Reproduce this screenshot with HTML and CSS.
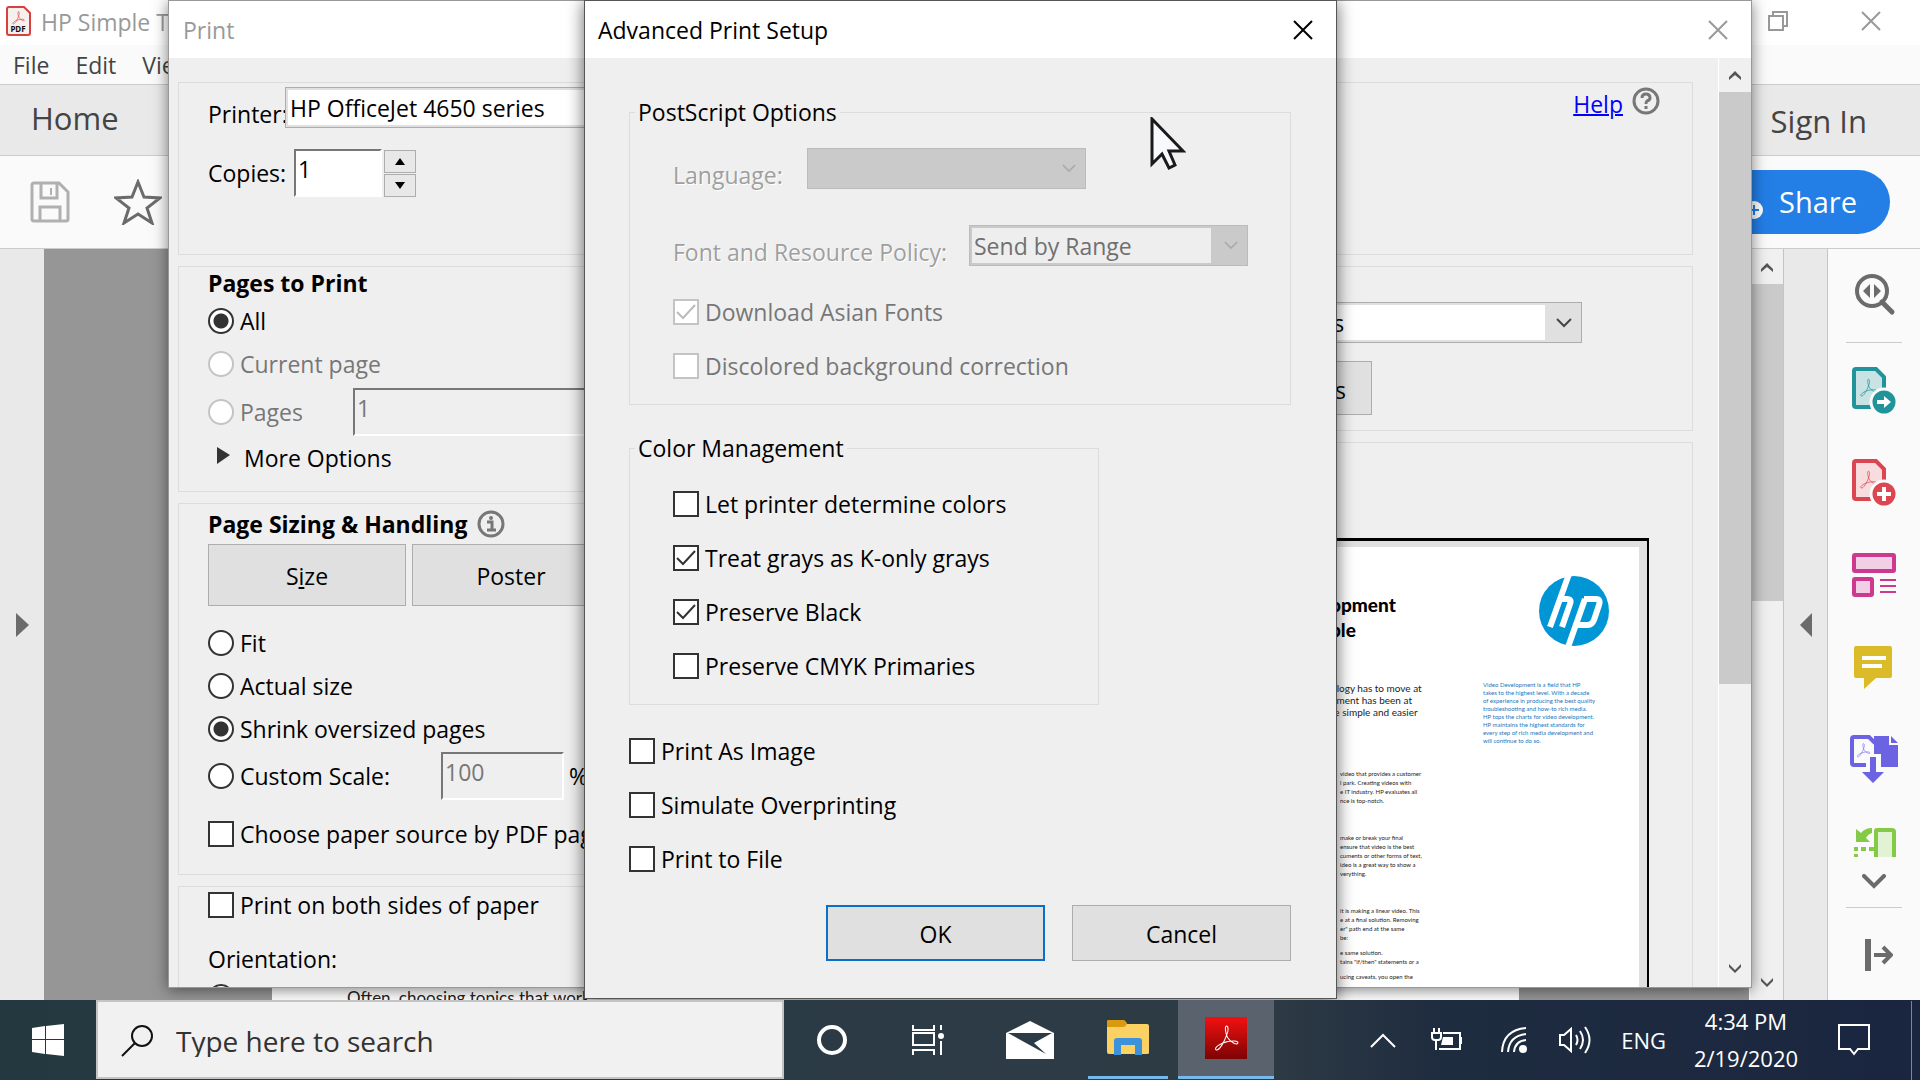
FILE: index.html
```
<!DOCTYPE html>
<html lang="en">
<head>
<meta charset="utf-8">
<title>Advanced Print Setup</title>
<link rel="stylesheet" href="styles.css">
</head>
<body>
<svg class="defs" aria-hidden="true">
  <symbol id="chev" viewBox="0 0 16 10"><path d="M1 1l7 7 7-7" fill="none" stroke="currentColor" stroke-width="2"/></symbol>
  <symbol id="up" viewBox="0 0 14 12"><path d="M1 10V7l6-6 6 6v3L7 5z" fill="currentColor"/></symbol>
  <symbol id="down" viewBox="0 0 14 12"><path d="M1 1v3l6 6 6-6V1L7 7z" fill="currentColor"/></symbol>
  <symbol id="close" viewBox="0 0 20 20"><path d="M1 1l18 18M19 1L1 19" fill="none" stroke="currentColor" stroke-width="2"/></symbol>
  <symbol id="acro" viewBox="0 0 26 26"><path d="M13 1c2 0 2 5 0 9-2 6-7 15-10 14-3-2 5-7 11-8 5-1 10-1 10 1 0 3-7 0-10-5-2-4-3-11-1-11z" fill="none" stroke="currentColor"/></symbol>
</svg>

<main class="desktop">
  <section class="app" aria-label="Document window">
    <header class="app-title">
      <svg width="25" height="30" viewBox="0 0 25 30"><path d="M3 1h15l6 6v20q0 2-2 2H3q-2 0-2-2V3q0-2 2-2z" fill="#f6f0ef" stroke="#d9403b" stroke-width="2"/><use href="#acro" x="5" y="5" width="15" height="14" color="#e02b27"/><text x="12" y="26" text-anchor="middle" class="pdf-tag">PDF</text></svg>
      <span class="app-name">HP Simple T</span>
      <button class="bare" aria-label="Restore"><svg width="20" height="20" viewBox="0 0 20 20" fill="none" stroke="#999" stroke-width="2"><path d="M1 5h14v14H1zM5 5V1h14v14h-4"/></svg></button>
      <button class="bare" aria-label="Close"><svg width="20" height="20"><use href="#close"/></svg></button>
    </header>
    <nav class="menu"><button class="bare">File</button><button class="bare">Edit</button><button class="bare">View</button></nav>
    <div class="tabs"><button class="bare">Home</button><button class="bare sign">Sign In</button></div>
    <div class="tools">
      <button class="bare" aria-label="Save"><svg width="40" height="42" viewBox="0 0 40 42" fill="none" stroke="#b0b0b0" stroke-width="3"><path d="M4 2h25l9 9v27q0 2-2 2H4q-2 0-2-2V4q0-2 2-2zM11 2v15h16V2M10 40V26h20v14"/><path d="M21 7v7" stroke-width="2"/></svg></button>
      <button class="bare" aria-label="Favorite"><svg width="48" height="46" viewBox="0 0 48 46"><path d="M24 3l6 15 16 1-13 10 5 15-14-9-14 9 5-15L2 19l16-1z" fill="none" stroke="#6b6b6b" stroke-width="3"/></svg></button>
      <button class="share"><svg width="24" height="18" viewBox="0 0 24 18"><circle cx="15" cy="9" r="9" fill="#fff"/><path d="M15 4v10M10 9h10" stroke="#237ee6" stroke-width="2"/></svg>Share</button>
    </div>
    <div class="work">
      <div class="rail"><svg width="13" height="24" viewBox="0 0 13 24"><path d="M0 0l13 12L0 24z" fill="#6b6b6b"/></svg></div>
      <div class="canvas"><article class="sheet"><p>Often, choosing topics that work</p></article></div>
      <div class="bar wide"><svg width="14" height="12"><use href="#up"/></svg><i class="thumb short"></i><svg width="14" height="12"><use href="#down"/></svg></div>
      <div class="rail right"><svg width="12" height="24" viewBox="0 0 12 24"><path d="M12 0L0 12l12 12z" fill="#6b6b6b"/></svg></div>
      <aside class="side">
        <svg class="find" width="48" height="44" viewBox="0 0 48 44"><circle cx="21" cy="19" r="15" fill="none" stroke="#6b6b6b" stroke-width="4"/><path d="M31 30l10 10" stroke="#6b6b6b" stroke-width="5" stroke-linecap="round"/><path d="M19 12v14l-7-7zM23 12v14l7-7z" fill="#6b6b6b"/></svg>
        <hr>
        <svg width="48" height="48" viewBox="0 0 48 48"><path d="M6 2h20l8 8v30H6q-2 0-2-2V4q0-2 2-2z" fill="#c9e3e4" stroke="#20949a" stroke-width="4"/><use href="#acro" x="9" y="10" width="19" height="22" color="#20949a"/><circle cx="34" cy="35" r="13" fill="#20949a" stroke="#fafafa" stroke-width="3"/><path d="M27 33h7v-4l7 6-7 6v-4h-7z" fill="#fff"/></svg>
        <svg width="48" height="48" viewBox="0 0 48 48"><path d="M6 2h20l8 8v30H6q-2 0-2-2V4q0-2 2-2z" fill="#f8dcde" stroke="#db4650" stroke-width="4"/><use href="#acro" x="9" y="10" width="19" height="22" color="#db4650"/><circle cx="34" cy="35" r="13" fill="#db4650" stroke="#fafafa" stroke-width="3"/><path d="M34 28v14M27 35h14" stroke="#fff" stroke-width="4"/></svg>
        <svg width="48" height="48" viewBox="0 0 48 48" fill="#f3cfe6" stroke="#cb3a8f" stroke-width="4"><rect x="4" y="4" width="40" height="16" rx="1"/><rect x="4" y="28" width="18" height="16" rx="1"/><path d="M30 29h16M30 35h16M30 41h16" stroke-width="2"/></svg>
        <svg width="48" height="48" viewBox="0 0 48 48"><path d="M6 3h34q2 0 2 2v28q0 2-2 2H26L14 46V35H6q-2 0-2-2V5q0-2 2-2z" fill="#dcbb29"/><path d="M12 15h24M12 23h20" stroke="#fff" stroke-width="4"/></svg>
        <svg width="48" height="48" viewBox="0 0 48 48"><path d="M16 30H4q-2 0-2-2V4q0-2 2-2h15l6 6" fill="none" stroke="#6c63e3" stroke-width="4"/><use href="#acro" x="6" y="7" width="15" height="17" color="#6c63e3"/><path d="M24 1h15v9h9v22H31V19h-7z" fill="#6c63e3"/><path d="M41 1l7 7h-7zM20 22h6v15h8L23 48 12 37h8z" fill="#6c63e3"/></svg>
        <svg class="cut" width="48" height="30" viewBox="0 0 48 30"><path d="M26 30V4q0-1 1-1h15q2 0 2 2v25" fill="#e2f2d4" stroke="#85ca46" stroke-width="4"/><path d="M6 2v13h14l-4-4q2-4 6-5V1q-7 0-11 5z" fill="#85ca46"/><path d="M4 22h4m3 0h5m3 0h5M6 20v4m0 3v3" stroke="#85ca46" stroke-width="4"/></svg>
        <svg width="24" height="15" viewBox="0 0 24 15"><path d="M2 2l10 10L22 2" fill="none" stroke="#6b6b6b" stroke-width="4" stroke-linecap="round"/></svg>
        <hr>
        <svg class="expand" width="28" height="34" viewBox="0 0 28 34" stroke="#6b6b6b" fill="none"><path d="M3 1v32" stroke-width="6"/><path d="M9 17h15M18 9l8 8-8 8" stroke-width="4"/></svg>
      </aside>
    </div>
  </section>

  <section class="window print" aria-label="Print">
    <header class="caption"><span>Print</span><button class="bare" aria-label="Close"><svg width="20" height="20"><use href="#close"/></svg></button></header>
    <div class="scroll">
      <form class="form">
        <div class="group top">
          <div class="line spread">
            <div class="line end"><label for="printer">Printer:</label><span class="combo printer"><select id="printer"><option>HP OfficeJet 4650 series</option></select></span></div>
            <div class="help"><a href="#help">Help</a><svg width="28" height="28" viewBox="0 0 28 28"><circle cx="14" cy="14" r="12" fill="none" stroke="#777" stroke-width="3"/><path d="M10 11q0-4 4-4t4 4q0 2-3 3-1 1-1 3M14 19v3" fill="none" stroke="#777" stroke-width="3"/></svg></div>
          </div>
          <div class="line copies"><label for="copies">Copies:</label><input id="copies" class="box" value="1"><span class="spin"><button type="button" aria-label="More copies"><svg width="10" height="7"><path d="M0 7l5-7 5 7z"/></svg></button><button type="button" aria-label="Fewer copies"><svg width="10" height="7"><path d="M0 0l5 7 5-7z"/></svg></button></span></div>
        </div>
        <div class="columns">
          <div class="left">
            <div class="group pages">
              <h2>Pages to Print</h2>
              <label class="opt"><input type="radio" name="range" checked>All</label>
              <label class="opt off"><input type="radio" name="range" disabled>Current page</label>
              <div class="line tall"><label class="opt off"><input type="radio" name="range" disabled>Pages</label><input class="box range" aria-label="Page range" value="1" disabled></div>
              <button type="button" class="bare more"><svg width="13" height="17"><path d="M0 0l13 8L0 17z" fill="#333"/></svg>More Options</button>
            </div>
            <div class="group sizing">
              <h2 class="with-icon">Page Sizing &amp; Handling <svg width="28" height="28" viewBox="0 0 28 28"><circle cx="14" cy="14" r="12" fill="none" stroke="#777" stroke-width="3"/><path d="M10 12h5v8M10 20h9" fill="none" stroke="#777" stroke-width="3"/><circle cx="14" cy="8" r="2" fill="#777"/></svg></h2>
              <div class="line modes"><button type="button" class="push">S<u>i</u>ze</button><button type="button" class="push">Poster</button></div>
              <label class="opt"><input type="radio" name="scale">Fit</label>
              <label class="opt"><input type="radio" name="scale">Actual size</label>
              <label class="opt"><input type="radio" name="scale" checked>Shrink oversized pages</label>
              <div class="line custom"><label class="opt"><input type="radio" name="scale">Custom Scale:</label><input class="box percent" aria-label="Custom scale" value="100" disabled>%</div>
              <label class="opt paper"><input type="checkbox">Choose paper source by PDF page size</label>
            </div>
            <div class="group duplex">
              <label class="opt"><input type="checkbox">Print on both sides of paper</label>
              <div class="orient">Orientation:</div>
              <label class="opt"><input type="radio" name="orient" aria-label="Portrait"></label>
            </div>
          </div>
          <div class="rightcol">
            <div class="group comments">
              <div class="stack">
                <span class="combo docs"><select aria-label="Comments and forms"><option>Document and Markups</option></select><svg width="16" height="10"><use href="#chev"/></svg></span>
                <button type="button" class="push">Summarize Comments</button>
              </div>
            </div>
            <div class="group look">
              <div class="preview"><div class="paperview">
                <div class="copy">
                  <h3>opment<br>ble</h3>
                  <p class="lead">ology has to move at<br>pment has been at<br>fe simple and easier</p>
                  <p>video that provides a customer<br>l park. Creating videos with<br>e IT industry. HP evaluates all<br>nce is top-notch.</p>
                  <p>make or break your final<br>ensure that video is the best<br>cuments or other forms of text,<br>ideo is a great way to show a<br>verything.</p>
                  <p>it is making a linear video. This<br>e at a final solution. Removing<br>er" path end at the same<br>be:</p>
                  <p class="near">e same solution.<br>tains "if/then" statements or a</p>
                  <p class="near">ucing caveats, you open the</p>
                </div>
                <div class="aside">
                  <svg width="71" height="72" viewBox="0 0 71 72"><circle cx="35" cy="36" r="35" fill="#0096d6"/><g fill="none" stroke="#fff" stroke-width="6"><path d="M30 -1L11 52M22 24h6q5 0 3 5l-8 23"/><path d="M46 24L28 75M45 24h12q5 0 3 6l-5 15q-2 5-6 5H38"/></g></svg>
                  <p>Video Development is a field that HP<br>takes to the highest level. With a decade<br>of experience in producing the best quality<br>troubleshooting and how-to rich media.<br>HP tops the charts for video development.<br>HP maintains the highest standards for<br>every step of rich media development and<br>will continue to do so.</p>
                </div>
              </div></div>
            </div>
          </div>
        </div>
      </form>
      <div class="bar"><svg width="14" height="12"><use href="#up"/></svg><i class="thumb"></i><svg width="14" height="12"><use href="#down"/></svg></div>
    </div>
  </section>

  <section class="window advanced" role="dialog" aria-label="Advanced Print Setup">
    <header class="caption"><span>Advanced Print Setup</span><button class="bare" aria-label="Close dialog"><svg width="20" height="20"><use href="#close"/></svg></button></header>
    <form class="setup">
      <fieldset>
        <legend>PostScript Options</legend>
        <div class="line end ps"><label class="etched lang" for="lang">Language:</label><span class="combo dim blank"><select id="lang" disabled><option></option></select><svg width="14" height="9"><use href="#chev"/></svg></span></div>
        <div class="line end ps"><label class="etched policy" for="policy">Font and Resource Policy:</label><span class="combo dim"><select id="policy" disabled><option>Send by Range</option></select><svg width="14" height="9"><use href="#chev"/></svg></span></div>
        <label class="opt off"><input type="checkbox" checked disabled>Download Asian Fonts</label>
        <label class="opt off"><input type="checkbox" disabled>Discolored background correction</label>
      </fieldset>
      <fieldset class="color">
        <legend>Color Management</legend>
        <label class="opt"><input type="checkbox">Let printer determine colors</label>
        <label class="opt"><input type="checkbox" checked>Treat grays as K-only grays</label>
        <label class="opt"><input type="checkbox" checked>Preserve Black</label>
        <label class="opt"><input type="checkbox">Preserve CMYK Primaries</label>
      </fieldset>
      <div class="extras">
        <label class="opt"><input type="checkbox">Print As Image</label>
        <label class="opt"><input type="checkbox">Simulate Overprinting</label>
        <label class="opt"><input type="checkbox">Print to File</label>
      </div>
      <div class="actions"><button type="button" class="push default">OK</button><button type="button" class="push">Cancel</button></div>
    </form>
  </section>
  <svg class="pointer" width="36" height="54" viewBox="0 0 36 54"><path d="M2 2v45l10-10 7 14 6-3-6-14h14z" fill="#f8f9fc" stroke="#1a1a1a" stroke-width="3"/></svg>
</main>

<footer class="taskbar">
  <button class="start" aria-label="Start"><svg width="32" height="32" viewBox="0 0 32 32" fill="#fff"><path d="M0 4l13-2v13H0zM14 2l18-2v15H14zM0 16h13v14L0 28zM14 16h18v16l-18-2z"/></svg></button>
  <label class="search"><svg width="34" height="34" viewBox="0 0 34 34" fill="none" stroke="#111" stroke-width="2"><circle cx="22" cy="12" r="10"/><path d="M15 19L2 32"/></svg><input placeholder="Type here to search" aria-label="Search"></label>
  <div class="pins">
    <button aria-label="Cortana"><svg width="32" height="32"><circle cx="16" cy="16" r="13" fill="none" stroke="#fff" stroke-width="4"/></svg></button>
    <button aria-label="Task view"><svg width="32" height="32" viewBox="0 0 32 32" fill="none" stroke="#fff" stroke-width="2"><path d="M1 1v5h21V1M1 9h21v12H1zM1 31v-5h21v5M29 1v5M29 17v14"/><circle cx="29" cy="12" r="3" fill="#fff" stroke="none"/></svg></button>
    <button aria-label="Mail"><svg width="48" height="38" viewBox="0 0 48 38"><path d="M0 12L24 0l24 12v26H0z" fill="#fff"/><path d="M2 12h44L28 22l12 11z" fill="#2b3c47"/></svg></button>
    <button class="open" aria-label="File Explorer"><svg width="42" height="36" viewBox="0 0 42 36"><path d="M0 2q0-2 2-2h15l3 4h20q2 0 2 2v27q0 1-2 1H2q-2 0-2-2z" fill="#fcd164"/><path d="M0 2q0-2 2-2h15l3 3q-1 4-4 4H0z" fill="#d99a10"/><path d="M7 35V21q0-3 3-3h22q3 0 3 3v14h-7V25H14v10z" fill="#3c93d9"/></svg></button>
    <button class="open active" aria-label="Acrobat"><svg width="42" height="42" viewBox="0 0 42 42"><defs><linearGradient id="red" x2="0" y2="1"><stop stop-color="#f41010"/><stop offset="1" stop-color="#7d0303"/></linearGradient></defs><path d="M0 0h42v42H0z" fill="url(#red)"/><use href="#acro" x="8" y="8" width="27" height="27" color="#fff"/></svg></button>
  </div>
  <div class="tray">
    <svg width="26" height="15" viewBox="0 0 26 15" class="t1"><path d="M1 14L13 2l12 12"/></svg>
    <svg width="32" height="24" viewBox="0 0 32 24" class="t2"><path d="M12 5h17v16H8M30 9v7M3 0v5M8 0v5M1 5h9v4q0 3-3 3H4q-3 0-3-3zM5 12v10"/><path d="M12 9h10v8H10z" fill="#fff" stroke="none"/></svg>
    <svg width="26" height="26" viewBox="0 0 26 26" class="t3"><path d="M1 25Q2 3 25 1M7 25Q8 9 25 7M13 25q1-11 12-12"/><circle cx="22" cy="22" r="3" fill="#fff"/></svg>
    <svg width="34" height="28" viewBox="0 0 34 28" class="t4"><path d="M1 9h4l7-6v22l-7-6H1zM17 9q3 5 0 10M21 5q6 9 0 18M26 1q9 13 0 26"/></svg>
    <span class="lang-id">ENG</span>
    <time>4:34 PM<br>2/19/2020</time>
    <svg width="32" height="32" viewBox="0 0 32 32" class="t5"><path d="M1 1h30v24H20l-4 5-4-5H1z"/></svg>
  </div>
</footer>
</body>
</html>
```
FILE: styles.css
```
* { box-sizing: border-box; }
body { margin: 0; height: 100vh; display: flex; flex-direction: column; overflow: hidden; font: 23px/32px "Open Sans", "Noto Sans", sans-serif; color: #000; background: #2b3a45; }
button, input, select { font: inherit; color: inherit; margin: 0; }
button { padding: 0; }
h2, h3, p { margin: 0; }
svg { display: block; flex: none; }
.defs { position: absolute; width: 0; height: 0; }
.bare { border: 0; background: none; }
.desktop { position: relative; flex: 1; min-height: 0; overflow: hidden; }
.line { display: flex; align-items: center; }
.end { align-items: flex-end; }
.end > label { line-height: 28px; }
.spread { justify-content: space-between; align-items: flex-start; }

/* document window */
.app { height: 100%; display: flex; flex-direction: column; background: #fafafa; color: #444; }
.app-title { height: 45px; padding: 0 39px 3px 6px; display: flex; align-items: center; background: #fff; color: #999; }
.app-name { margin-left: 10px; padding-top: 2px; flex: 1; }
.app-title .bare + .bare { margin-left: 73px; }
.pdf-tag { font: bold 8px "Noto Sans", sans-serif; fill: #111; }
.menu { height: 39px; padding-left: 13px; display: flex; align-items: center; gap: 26px; }
.tabs { height: 72px; padding: 0 53px 4px 31px; display: flex; justify-content: space-between; align-items: center; background: #e9e9e9; border: 1px solid #ccc; border-width: 1px 0; font-size: 31px; }
.tabs .sign { padding-top: 6px; }
.tools { height: 93px; padding: 0 30px; display: flex; align-items: center; gap: 44px; border-bottom: 1px solid #ccc; }
.share { margin-left: auto; height: 64px; width: 172px; padding-right: 33px; display: flex; align-items: center; justify-content: flex-end; gap: 16px; border: 0; border-radius: 0 32px 32px 0; background: #237ee6; color: #fff; font-size: 29px; }
.share svg { margin-top: 16px; }
.work { flex: 1; min-height: 0; display: flex; }
.rail { width: 44px; display: flex; align-items: center; justify-content: center; background: #e9e9e9; }
.rail.right { border: 1px solid #c4c4c4; border-width: 0 1px; width: 45px; }
.canvas { flex: 1; padding: 0 230px 0 228px; background: #969696; }
.sheet { height: 100%; padding-left: 75px; display: flex; align-items: flex-end; overflow: hidden; background: #fff; }
.sheet p { margin-bottom: -8px; font: 17px/20px Lato, sans-serif; color: #222; }
.bar { width: 33px; padding: 12px 0; display: flex; flex-direction: column; align-items: center; background: #f0f0f0; color: #555; border-left: 1px solid #fff; }
.bar .thumb { width: 32px; height: 592px; margin: 10px 0 auto; background: #cacaca; }
.bar.wide { width: 34px; padding: 13px 0 11px; }
.bar .thumb.short { height: 317px; }
.side { width: 92px; padding: 23px 0 29px; display: flex; flex-direction: column; align-items: center; background: #fafafa; }
.side > svg { margin-bottom: 44px; }
.side hr { width: 56px; margin: 0 0 24px; border: 0; border-top: 1px solid #ccc; }
.side .find { margin-bottom: 26px; margin-left: 2px; }
.side .cut { margin-bottom: 17px; }
.side .cut + svg { margin-bottom: 18px; }
.side hr ~ hr { margin-bottom: 30px; }
.side .expand { margin: 0 0 0 10px; }

/* shared dialog parts */
.window { position: absolute; top: 0; display: flex; flex-direction: column; background: #efefef; }
.caption { height: 58px; padding: 0 23px 0 13px; display: flex; align-items: center; justify-content: space-between; background: #fff; flex: none; }
.group { border: 1px solid #dcdcdc; padding-left: 29px; }
.opt { display: flex; align-items: center; gap: 6px; height: 43px; white-space: nowrap; }
.opt input { appearance: none; flex: none; width: 26px; height: 26px; border: 2px solid #333; background: #fff center / 20px no-repeat; }
.opt input[type=radio] { border-radius: 50%; }
.opt input[type=radio]:checked { background: radial-gradient(circle, #333 7px, #fff 8px); }
.opt input[type=checkbox]:checked { background-image: url("data:image/svg+xml,%3Csvg xmlns='http://www.w3.org/2000/svg' viewBox='0 0 20 20'%3E%3Cpath d='M1 10l6 6L19 3' fill='none' stroke='%23333' stroke-width='2'/%3E%3C/svg%3E"); }
.off { color: #777; }
.off input { border-color: #c4c4c4; }
.opt.off input[type=checkbox]:checked { background-image: url("data:image/svg+xml,%3Csvg xmlns='http://www.w3.org/2000/svg' viewBox='0 0 20 20'%3E%3Cpath d='M1 10l6 6L19 3' fill='none' stroke='%23bbb' stroke-width='2'/%3E%3C/svg%3E"); }
.box { height: 48px; padding: 0 2px 8px; border: 2px solid; border-color: #777 #fff #fff #777; border-radius: 0; background: #fff; }
.box:disabled { background: #efefef; color: #777; }
.push { border: 1px solid #adadad; background: #e0e0e0; padding-top: 2px; }
.combo { position: relative; display: block; height: 41px; background: #e0e0e0; border: 1px solid #adadad; padding: 2px 36px 2px 2px; }
.combo select { appearance: none; display: block; width: 100%; height: 35px; padding: 0 2px; border: 0; border-radius: 0; background: #fff; opacity: 1; }
.combo svg { position: absolute; right: 9px; top: 15px; color: #444; }
.combo.dim { width: 279px; background: #cacaca; border-color: #bbb; }
.combo.dim select { background: #eee; color: #707070; }
.combo.dim.blank select { background: #cacaca; }
.combo.dim svg { color: #aaa; }

/* print dialog */
.print { left: 168px; right: 168px; bottom: 12px; border: 1px solid #999; box-shadow: 0 2px 14px rgba(0,0,0,.5); }
.print > .caption { color: #999; height: 57px; padding-left: 14px; }
.scroll { flex: 1; min-height: 0; display: flex; }
.form { flex: 1; min-width: 0; padding: 24px 25px 0 9px; overflow: hidden; }
.top { height: 173px; padding-top: 4px; }
.top label { width: 77px; }
.printer { width: 480px; padding-right: 2px; }
.help { display: flex; gap: 9px; margin-right: 32px; }
.help a { color: #00f; line-height: 34px; text-decoration-thickness: 2px; }
.copies { margin-top: 21px; }
.copies .box { width: 88px; margin: 0 2px 0 9px; }
.spin { display: grid; gap: 1px; }
.spin button { width: 32px; height: 23px; border: 1px solid #adadad; background: #e8e8e8; display: grid; place-items: center; }
.columns { display: flex; gap: 12px; margin-top: 11px; }
.left { width: 500px; }
.rightcol { flex: 1; }
h2 { font-size: 23px; line-height: 32px; }
.pages { height: 226px; margin-bottom: 11px; }
.tall { height: 54px; }
.tall .opt { width: 145px; }
.range { width: 280px; }
.more { height: 38px; padding-left: 9px; display: flex; align-items: center; gap: 14px; }
.more svg { margin-bottom: 5px; }
.with-icon { height: 40px; display: flex; align-items: center; gap: 10px; }
.sizing { height: 372px; margin-bottom: 11px; }
.modes { gap: 6px; margin-bottom: 15px; }
.modes .push { width: 198px; height: 62px; }
.custom { height: 52px; }
.custom .opt { width: 233px; }
.percent { width: 123px; margin-right: 5px; }
.opt.paper { height: 64px; }
.duplex .opt { height: 36px; }
.orient { margin-top: 16px; line-height: 40px; }
.comments { height: 165px; padding: 35px 110px 0 0; margin-bottom: 11px; }
.stack { width: 500px; margin-left: auto; }
.docs select { padding-left: 0; }
.stack .push { width: 290px; height: 54px; margin-top: 18px; padding: 4px 6px 0 0; }
.look { padding: 95px 43px 0 0; height: 560px; }
.preview { width: 500px; margin-left: auto; border: 3px solid #000; border-width: 3px 2px 0 3px; padding: 6px 8px 0; background: #e0e0e0; }
.paperview { height: 455px; display: grid; grid-template-columns: 157px 156px; justify-content: end; background: #fff; overflow: hidden; white-space: nowrap; }
.copy { padding: 45px 0 0 14px; font: 6px/9px Lato, sans-serif; color: #222; }
.copy p { margin-bottom: 28px; }
.copy h3 { margin: 0 0 40px -10px; font-size: 19px; font-weight: 900; line-height: 25px; color: #000; }
.copy .lead { font-size: 10px; line-height: 12px; margin: 0 0 51px -9px; }
.copy p:nth-last-child(-n+3) { margin-bottom: 6px; }
.aside { padding-top: 28px; font: 6px/8px Lato, sans-serif; color: #1b76bd; }
.aside svg { margin: 0 0 34px 56px; }

/* advanced dialog */
.advanced { left: 584px; width: 753px; bottom: 1px; border: 1px solid #555; box-shadow: 0 2px 16px rgba(0,0,0,.6); }
.advanced > .caption { height: 57px; }
.setup { padding: 38px 45px 0 44px; }
fieldset { margin: 0; border: 1px solid #dcdcdc; padding: 20px 42px 11px 43px; min-width: 0; }
legend { margin-left: -38px; padding: 0 3px; }
.ps { margin-bottom: 36px; justify-content: flex-start; }
.ps + .ps { margin-bottom: 19px; }
.etched { color: #9f9f9f; text-shadow: 1px 1px #fff; white-space: nowrap; }
.lang { width: 134px; }
.policy { width: 296px; }
.advanced .opt { height: 54px; }
.color { width: 470px; margin-top: 27px; padding-top: 13px; }
.extras { margin-top: 19px; }
.actions { display: flex; justify-content: flex-end; gap: 27px; margin-top: 19px; }
.actions .push { width: 219px; height: 56px; }
.actions .default { border: 2px solid #0a6fc9; }
.pointer { position: absolute; left: 1150px; top: 117px; }

/* taskbar */
.taskbar { height: 80px; flex: none; display: flex; background: linear-gradient(90deg, #243840 0, #2c3b46 50%, #2e3b45 66%, #1e2c3f 75%, #1a2640 100%); color: #fff; }
.taskbar button { border: 0; background: none; display: grid; place-items: center; }
.start { width: 96px; }
.search { width: 688px; height: 79px; display: flex; align-items: center; gap: 22px; padding: 2px 0 0 22px; background: #f1f1f1; border: 2px solid #c4c4c4; }
.search input { flex: 1; min-width: 0; border: 0; padding: 0; background: none; font-size: 28px; }
.search input::placeholder { color: #333; opacity: 1; }
.pins { display: flex; }
.pins button { width: 96px; height: 79px; }
.pins button:nth-child(3) { width: 108px; }
.pins button:nth-child(4) { width: 80px; margin: 0 10px 0 4px; }
.pins .open { border-bottom: 3px solid #76b9ed; }
.pins .active { background: #5a636d; }
.tray { flex: 1; padding-right: 8px; display: flex; align-items: center; justify-content: flex-end; }
.tray svg { fill: none; stroke: #fff; stroke-width: 2; }
.tray .t1, .tray .t3 { margin-right: 35px; }
.tray .t2 { margin-right: 38px; }
.tray .t3 { margin-right: 32px; }
.tray .t4 { margin-right: 28px; }
.lang-id { font-size: 22px; }
time { width: 124px; margin: 0 30px 0 18px; text-align: center; font-size: 22px; line-height: 37px; }
.tray .t5 { margin-right: 41px; }
.tray::after { content: ""; width: 1px; height: 79px; background: #7d8594; }
```
